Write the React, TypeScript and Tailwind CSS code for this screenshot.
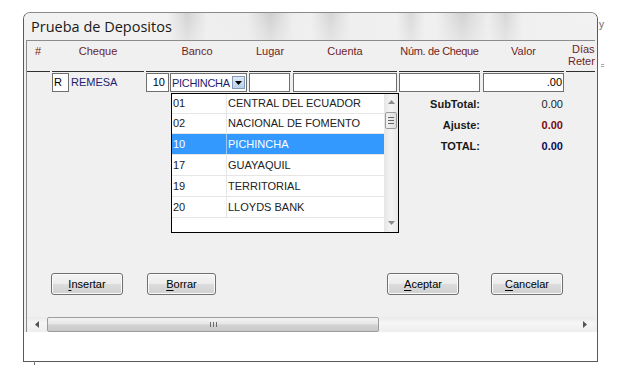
import React from 'react';

const banks = [
  { code: '01', name: 'CENTRAL DEL ECUADOR', h: 'h-[20px]' },
  { code: '02', name: 'NACIONAL DE FOMENTO', h: 'h-[20px]' },
  { code: '10', name: 'PICHINCHA', h: 'h-[21px]', selected: true },
  { code: '17', name: 'GUAYAQUIL', h: 'h-[21px]' },
  { code: '19', name: 'TERRITORIAL', h: 'h-[21px]' },
  { code: '20', name: 'LLOYDS BANK', h: 'h-[21px]' },
];

const VistaButton: React.FC<{ hot: string; rest: string; className: string }> = ({ hot, rest, className }) => (
  <button
    className={`h-[22px] rounded-[3px] border border-[#707070] bg-[linear-gradient(180deg,#f4f4f4_0%,#ececec_48%,#dcdcdc_52%,#d0d0d0_100%)] text-[11px] text-black shadow-[inset_0_0_0_1px_#fbfbfb] ${className}`}
  >
    <span className="underline underline-offset-2">{hot}</span>
    {rest}
  </button>
);

const BankDropdown: React.FC = () => (
  <div className="absolute left-[144px] top-[52px] w-[228px] h-[140px] border border-black bg-white flex">
    <div className="flex-1">
      {banks.map((b) => (
        <div
          key={b.code}
          className={`${b.h} flex items-center border-b border-[#e6e6e6] ${b.selected ? 'bg-[#3399ff] text-white' : 'text-[#222]'}`}
        >
          <div className={`w-[55px] h-full flex items-center pl-[1px] border-r ${b.selected ? 'border-[#9cc8f5]' : 'border-[#e6e6e6]'}`}>
            {b.code}
          </div>
          <div className="pl-[1px]">{b.name}</div>
        </div>
      ))}
    </div>
    <div className="w-[14px] h-full bg-[linear-gradient(90deg,#e6e6e6,#f4f4f4_50%,#e8e8e8)] flex flex-col items-center">
      <svg width="7" height="4" className="mt-[6px]" viewBox="0 0 7 4">
        <path d="M0 4 L3.5 0 L7 4 Z" fill="#8a8a8a" />
      </svg>
      <div className="mt-[8px] w-[12px] h-[17px] rounded-[2px] border border-[#9a9a9a] bg-[linear-gradient(90deg,#f2f2f2,#dedede)] flex flex-col items-center justify-center gap-[2px]">
        <div className="w-[6px] h-px bg-[#666]" />
        <div className="w-[6px] h-px bg-[#666]" />
        <div className="w-[6px] h-px bg-[#666]" />
      </div>
      <div className="flex-1" />
      <svg width="7" height="4" className="mb-[7px]" viewBox="0 0 7 4">
        <path d="M0 0 L3.5 4 L7 0 Z" fill="#8a8a8a" />
      </svg>
    </div>
  </div>
);

const App: React.FC = () => {
  return (
    <div className="relative w-[622px] h-[375px] bg-white overflow-hidden font-['Liberation_Sans',Arial,sans-serif] text-[11px]">
      <div className="pl-[23px] pt-[12px]">
        <div className="w-[575px] h-[350px] border border-[#5a5a5a] border-t-[#8a8a8a] rounded-t-[7px] overflow-hidden flex flex-col bg-[#f0f0f0]">
          <div className="h-[27px] shrink-0 flex items-center pl-[7px] pt-[1px] bg-[linear-gradient(180deg,rgba(246,246,246,0)_0%,rgba(240,240,240,0.55)_100%),linear-gradient(90deg,#f2f2f2_0%,#f2f2f2_25%,#d3d3d3_28.5%,#efefef_32%,#ededed_39%,#cfcfcf_43%,#eeeeee_47%,#f0f0f0_50%,#d5d5d5_53.5%,#efefef_57%,#f0f0f0_65%,#d9d9d9_67.5%,#f0f0f0_70%,#f0f0f0_72%,#d2d2d2_76.5%,#eeeeee_81%,#d7d7d7_84%,#f0f0f0_87%,#f2f2f2_100%)]">
            <span className="font-['Open_Sans',sans-serif] text-[14.5px] text-[#1a1a1a]">Prueba de Depositos</span>
          </div>

          <div className="mx-[2px] h-[292px] shrink-0 border-l border-t border-[#8c8c8c] bg-[#f0f0f0] flex flex-col relative">
            {/* column headers */}
            <div className="flex h-[32px] text-[#6e1f1f] overflow-hidden">
              <div className="w-[23px] shrink-0 border-b border-[#303030] pl-[8px] pt-[2px]">#</div>
              <div className="w-[92px] ml-[2px] shrink-0 border-b border-[#303030] text-center pt-[2px]">Cheque</div>
              <div className="w-[102px] ml-[2px] shrink-0 border-b border-[#303030] text-center pt-[2px]">Banco</div>
              <div className="w-[42px] ml-[1px] shrink-0 border-b border-[#303030] text-center pt-[2px]">Lugar</div>
              <div className="w-[104px] ml-[2px] shrink-0 border-b border-[#303030] text-center pt-[2px]">Cuenta</div>
              <div className="w-[81px] ml-[2px] shrink-0 border-b border-[#303030] flex justify-center pt-[2px]">
                <span className="whitespace-nowrap tracking-[-0.35px]">Núm. de Cheque</span>
              </div>
              <div className="w-[81px] ml-[3px] shrink-0 border-b border-[#303030] text-center pt-[2px]">Valor</div>
              <div className="w-[29px] ml-[2px] shrink-0 border-b border-[#303030] pt-[2px] leading-[12px] whitespace-nowrap overflow-hidden">
                <div className="pl-[6px]">Días</div>
                <div className="pl-[2px]">Reten</div>
              </div>
            </div>

            {/* data row */}
            <div className="flex h-[19px] mt-[1px] items-stretch">
              <div className="w-[23px] shrink-0" />
              <div className="w-[92px] ml-[2px] shrink-0 flex items-stretch">
                <div className="w-[17px] border border-[#6f6f6f] bg-white pl-[1px] leading-[17px] text-black">R</div>
                <div className="pl-[2px] leading-[19px] text-[#1e1e72]">REMESA</div>
              </div>
              <div className="w-[102px] ml-[2px] shrink-0 flex items-stretch">
                <div className="w-[23px] border border-[#6f6f6f] bg-white text-right pr-[3px] leading-[17px] text-black">10</div>
                <div className="w-[77px] ml-[1px] border border-[#6f6f6f] bg-white flex items-center pl-[1px] text-[#1e1e72]">
                  <span className="flex-1 tracking-[-0.3px]">PICHINCHA</span>
                  <div className="w-[13px] h-[13px] mr-[1px] border border-[#7f9db9] bg-[linear-gradient(180deg,#dfeaf6,#b9d1ea)] flex items-center justify-center">
                    <svg width="7" height="4" viewBox="0 0 7 4">
                      <path d="M0 0 L7 0 L3.5 4 Z" fill="#000" />
                    </svg>
                  </div>
                </div>
              </div>
              <div className="w-[41px] ml-[1px] shrink-0 border border-[#6f6f6f] bg-white" />
              <div className="w-[104px] ml-[3px] shrink-0 border border-[#6f6f6f] bg-white" />
              <div className="w-[81px] ml-[2px] shrink-0 border border-[#6f6f6f] bg-white" />
              <div className="w-[81px] ml-[3px] shrink-0 border border-[#6f6f6f] bg-white text-right pr-[1px] leading-[17px] text-black">.00</div>
            </div>

            {/* totals */}
            <div className="mt-[1px] flex flex-col">
              <div className="flex h-[21px] items-center ml-[372px]">
                <div className="w-[81px] text-right font-bold text-[#1a1a1a]">SubTotal:</div>
                <div className="w-[80px] ml-[3px] text-right text-[#222]">0.00</div>
              </div>
              <div className="flex h-[21px] items-center ml-[372px]">
                <div className="w-[81px] text-right font-bold text-[#1a1a1a]">Ajuste:</div>
                <div className="w-[80px] ml-[3px] text-right font-bold text-[#7a0a0a]">0.00</div>
              </div>
              <div className="flex h-[21px] items-center ml-[372px]">
                <div className="w-[81px] text-right font-bold text-[#1a1a1a]">TOTAL:</div>
                <div className="w-[80px] ml-[3px] text-right font-bold text-[#0c0c5a]">0.00</div>
              </div>
            </div>

            {/* buttons */}
            <div className="mt-[117px] flex">
              <VistaButton hot="I" rest="nsertar" className="ml-[24px] w-[72px]" />
              <VistaButton hot="B" rest="orrar" className="ml-[24px] w-[69px]" />
              <VistaButton hot="A" rest="ceptar" className="ml-[171px] w-[72px]" />
              <VistaButton hot="C" rest="ancelar" className="ml-[32px] w-[72px]" />
            </div>

            {/* horizontal scrollbar */}
            <div className="mt-[22px] h-[15px] flex items-stretch bg-[linear-gradient(180deg,#e9e9e9,#f6f6f6_40%,#eeeeee)]">
              <div className="w-[20px] flex items-center justify-center">
                <svg width="4" height="7" viewBox="0 0 4 7">
                  <path d="M4 0 L0 3.5 L4 7 Z" fill="#555" />
                </svg>
              </div>
              <div className="w-[332px] rounded-[2px] border border-[#9c9c9c] bg-[linear-gradient(180deg,#f4f4f4_0%,#e6e6e6_45%,#d2d2d2_55%,#c9c9c9_100%)] flex items-center justify-center gap-[2px]">
                <div className="w-px h-[5px] bg-[#6a6a6a]" />
                <div className="w-px h-[5px] bg-[#6a6a6a]" />
                <div className="w-px h-[5px] bg-[#6a6a6a]" />
              </div>
              <div className="flex-1" />
              <div className="w-[20px] flex items-center justify-center">
                <svg width="4" height="7" viewBox="0 0 4 7">
                  <path d="M0 0 L4 3.5 L0 7 Z" fill="#555" />
                </svg>
              </div>
            </div>

            <BankDropdown />
          </div>

          <div className="flex-1 bg-white" />
        </div>
      </div>

      {/* bits of the window behind */}
      <span className="absolute left-[599px] top-[20px] text-[10px] text-[#666] leading-none">y</span>
      <div className="absolute left-[601px] top-[64px] w-[3px] h-[3px] border-y border-[#aaa]" />
      <div className="absolute left-[34px] top-[361px] w-px h-[4px] bg-[#777]" />
    </div>
  );
};

export default App;
